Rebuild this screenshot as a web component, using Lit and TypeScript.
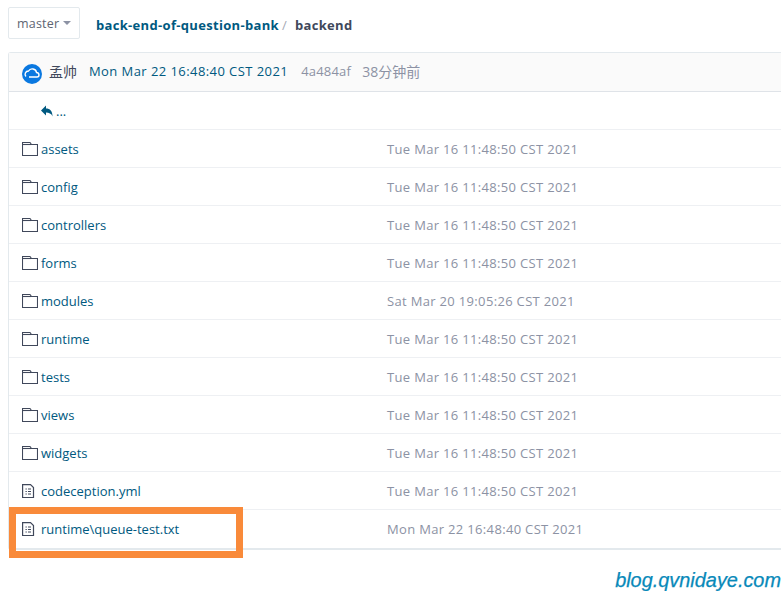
import { LitElement, html, css, svg } from "lit";
import { customElement } from "lit/decorators.js";

const rows: [string, string, string][] = [
  ["d", "assets", "Tue Mar 16 11:48:50 CST 2021"],
  ["d", "config", "Tue Mar 16 11:48:50 CST 2021"],
  ["d", "controllers", "Tue Mar 16 11:48:50 CST 2021"],
  ["d", "forms", "Tue Mar 16 11:48:50 CST 2021"],
  ["d", "modules", "Sat Mar 20 19:05:26 CST 2021"],
  ["d", "runtime", "Tue Mar 16 11:48:50 CST 2021"],
  ["d", "tests", "Tue Mar 16 11:48:50 CST 2021"],
  ["d", "views", "Tue Mar 16 11:48:50 CST 2021"],
  ["d", "widgets", "Tue Mar 16 11:48:50 CST 2021"],
  ["f", "codeception.yml", "Tue Mar 16 11:48:50 CST 2021"],
  ["f", "runtime\\queue-test.txt", "Mon Mar 22 16:48:40 CST 2021"],
];

const folder = svg`<svg class="ico" width="16" height="16" viewBox="0 0 16 16" fill="none" stroke="#40485b" stroke-width="1.1"><path d="M0.5 14.5V1.5H8L9.5 3.5H15.5V14.5Z"/><path d="M0.5 3.5H9.5" /></svg>`;
const file = svg`<svg class="ico" width="16" height="16" viewBox="0 0 16 16" fill="none" stroke="#40485b" stroke-width="1.2"><path d="M0.6 1.6H8.5L11.5 4.6V14.5H0.6Z"/><path d="M3.5 6H4.8M6 6H9M3.5 8.5H4.8M6 8.5H9M3.5 11H4.8M6 11H9"/></svg>`;

@customElement("app-root")
export class AppRoot extends LitElement {
  static styles = css`
    :host {
      display: block;
      position: relative;
      width: 781px;
      height: 591px;
      overflow: hidden;
      background: #fff;
      font-family: "Open Sans", "Noto Sans CJK SC", sans-serif;
      font-size: 13px;
      color: #40485b;
    }
    .top {
      display: flex;
      align-items: center;
      padding: 7px 0 0 8px;
      height: 32px;
    }
    .branch {
      box-sizing: border-box;
      width: 72px;
      height: 32px;
      border: 1px solid #e3e9ed;
      border-radius: 2px;
      display: flex;
      align-items: center;
      gap: 4px;
      padding-left: 8px;
      font-size: 12.5px;
      letter-spacing: 0.2px;
      color: #5e6572;
    }
    .caret {
      width: 0;
      height: 0;
      border-left: 4px solid transparent;
      border-right: 4px solid transparent;
      border-top: 4px solid #8c92a4;
    }
    .crumb {
      margin-left: 16px;
      font-weight: 700;
      font-size: 13px;
      letter-spacing: 0.32px;
      color: #005980;
      display: flex;
      align-items: center;
      padding-top: 4px;
    }
    .crumb .sep {
      color: #a5a9b5;
      font-weight: 400;
      margin: 0 8px 0 3px;
    }
    .crumb .cur {
      color: #40485b;
    }
    .card {
      box-sizing: border-box;
      margin: 13px 0 0 8px;
      width: 773px;
      border: 1px solid #e3e9ed;
      border-right: none;
      border-bottom: 2px solid #e3e9ed;
      border-radius: 3px 0 0 3px;
    }
    .head {
      display: flex;
      align-items: center;
      height: 38px;
      background: #fafafa;
      border-bottom: 1px solid #dfe3e8;
      padding-left: 13px;
      font-size: 13px;
    }
    .avatar {
      width: 20px;
      height: 20px;
      display: block;
      margin-top: 4px;
    }
    .head span {
      padding-bottom: 2px;
    }
    .author {
      margin-left: 7px;
      color: #40485b;
      font-size: 14px;
    }
    .date {
      margin-left: 12px;
      color: #005980;
      letter-spacing: 0.43px;
    }
    .hash {
      margin-left: 13px;
      color: #8c92a4;
      font-size: 13px;
      letter-spacing: 0.2px;
    }
    .ago {
      margin-left: 11px;
      color: #8c92a4;
      font-size: 14px;
    }
    .row {
      display: flex;
      align-items: center;
      box-sizing: border-box;
      height: 38px;
      border-bottom: 1px solid #eef0f3;
      padding-left: 13px;
      color: #005980;
    }
    .row:last-child {
      border-bottom: none;
    }
    .back {
      padding-left: 32px;
    }
    .back svg {
      display: block;
    }
    .dots {
      margin-left: 3px;
    }
    .name {
      width: 346px;
      margin-left: 3px;
    }
    .ico {
      display: block;
      flex: none;
    }
    .time {
      color: #8c92a4;
      letter-spacing: 0.33px;
    }
    .mark {
      position: absolute;
      left: 9px;
      top: 507px;
      width: 234px;
      height: 51px;
      box-sizing: border-box;
      border: 7px solid #f98a3a;
      pointer-events: none;
    }
    .wm {
      position: absolute;
      right: 0;
      top: 568px;
      font-family: "Liberation Sans", sans-serif;
      font-style: italic;
      font-size: 19.9px;
      line-height: 24px;
      color: #0889b9;
      -webkit-text-stroke: 0.25px #0889b9;
    }
  `;

  render() {
    return html`
      <div class="top">
        <div class="branch">master<span class="caret"></span></div>
        <div class="crumb">
          <span>back-end-of-question-bank</span><span class="sep">/</span><span class="cur">backend</span>
        </div>
      </div>
      <div class="card">
        <div class="head">
          <svg class="avatar" viewBox="0 0 20 20">
            <circle cx="10" cy="10" r="10" fill="#0a78e0" />
            <path d="M7 13H15C17.5 13 18 9 14.5 8.5C14 4.5 8.5 3.5 6.5 7C3.5 7 2 10.5 4 12.5" fill="none" stroke="#fff" stroke-width="1.4" />
          </svg>
          <span class="author">孟帅</span>
          <span class="date">Mon Mar 22 16:48:40 CST 2021</span>
          <span class="hash">4a484af</span>
          <span class="ago">38分钟前</span>
        </div>
        <div class="row back">
          <svg width="12" height="12" viewBox="0 0 12 12"><path d="M0 5.5L5 0.5V3.5C9 3.5 11.5 6 11.5 11.5C10.5 8.5 8 7.5 5 7.5V10.5Z" fill="#005980" /></svg>
          <span class="dots">...</span>
        </div>
        ${rows.map(
          ([k, n, t]) => html`<div class="row">
            ${k === "d" ? folder : file}
            <span class="name">${n}</span>
            <span class="time">${t}</span>
          </div>`
        )}
      </div>
      <div class="mark"></div>
      <div class="wm">blog.qvnidaye.com</div>
    `;
  }
}
